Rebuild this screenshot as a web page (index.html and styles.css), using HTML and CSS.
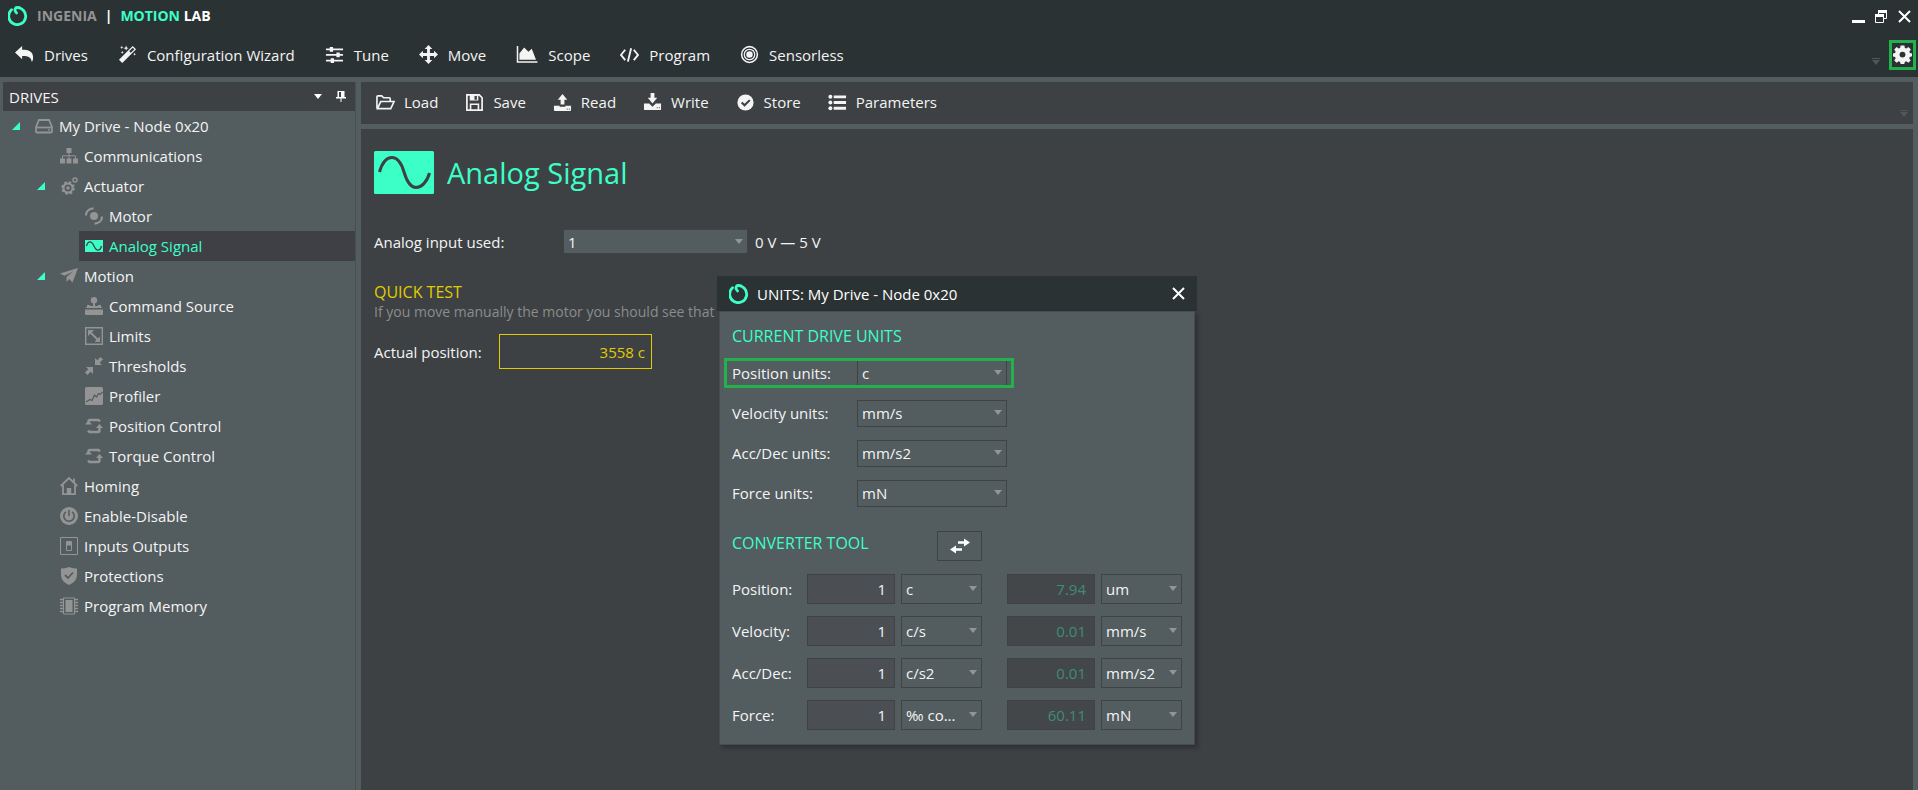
FILE: index.html
```html
<!DOCTYPE html>
<html lang="en">
<head>
    <meta charset="UTF-8">
    <meta name="viewport" content="width=device-width, initial-scale=1.0">
    <title>Ingenia Motion Lab</title>
    <link rel="stylesheet" href="styles.css">
</head>
<body>
    <!-- Shared icons -->
    <svg class="sprite" aria-hidden="true">
        <symbol id="i-logo" viewBox="0 0 20 20">
            <path d="M3.500 3.800A8.500 8.500 0 1 0 8 1.700c-1.500 1.500-1.300 3.300.5 5.200M8 1.700q2-.5 4 .1" fill="none" stroke="currentColor" stroke-width="2.800" stroke-linecap="round"/>
        </symbol>
        <symbol id="i-sine" viewBox="0 0 60 43">
            <rect width="60" height="43" rx="1.500" fill="#3cffc8"/>
            <path d="M5.500 21C8 12 12.500 6.500 18 6.500c6 0 9.500 6 12 14.500 3 10 6.500 15.500 12 15.500S53 31 55.500 22" fill="none" stroke="#3d4143" stroke-width="3"/>
        </symbol>
        <symbol id="i-loop" viewBox="0 0 18 18">
            <path d="M3.500 7V4.500q0-1.500 1.500-1.500h8.500l1.500 1.500M14.500 11v2.500q0 1.500-1.500 1.500H4.500L3 13.500" fill="none" stroke="currentColor" stroke-width="2.400"/>
            <path d="M0 7.500l3.500-4L7 7.500zM11 11l3.500-4L18 11z" fill="currentColor"/>
        </symbol>
        <symbol id="i-overflow" viewBox="0 0 8 7">
            <path d="M0 0h8v1H0zM0 2h8L4 7z" fill="#50575a"/>
        </symbol>
    </svg>

    <header class="app-header">
        <div class="title-bar">
            <svg class="logo"><use href="#i-logo"/></svg>
            <div class="brand"><span class="brand-company">INGENIA</span><span class="brand-sep">|</span><span class="brand-product">MOTION</span> LAB</div>
            <div class="window-buttons">
                <button type="button" aria-label="Minimize"><svg viewBox="0 0 13 13"><path d="M0 10h13v3H0z" fill="#fff"/></svg></button>
                <button type="button" aria-label="Restore"><svg viewBox="0 0 13 13"><path d="M3.500 4V1.500h8v7H9" fill="none" stroke="#fff"/><path d="M3 0h9v3H3z" fill="#fff"/><path d="M.5 5.500h8v7h-8z" fill="none" stroke="#fff"/><path d="M0 4h9v3H0z" fill="#fff"/></svg></button>
                <button type="button" aria-label="Close"><svg viewBox="0 0 13 13"><path d="M1 1l11 11M12 1L1 12" stroke="#fff" stroke-width="2"/></svg></button>
            </div>
        </div>
        <div class="nav-bar">
            <nav class="menu">
                <a href="#"><svg class="icon" viewBox="0 0 20 20"><path d="M7.500 1v4c7 0 11 2 11.500 7 .2 2.500-.2 4.500-1.300 6-.5-4.500-2.700-6.500-10.200-6.500V15L0 8z" fill="currentColor"/></svg>Drives</a>
                <a href="#"><svg class="icon" viewBox="0 0 20 20"><path d="M15.500 1L19 4.500 4.500 19 1 15.500zm0 1.800l-3.700 3.700 1.700 1.700 3.700-3.700z" fill="currentColor" fill-rule="evenodd"/><path d="M4 .5l.5 1.500 1.500.5-1.500.5L4 4.500 3.500 3 2 2.500 3.500 2zM8.500.5l.8 2 2 .8-2 .7-.8 2-.7-2-2-.7 2-.8zM4.500 6l.5 1.300 1.300.5-1.300.4-.5 1.300L4 8.200l-1.300-.4L4 7.300zM17.500 8l.4 1.200 1.200.5-1.200.4-.4 1.200-.5-1.200-1.200-.4 1.200-.5z" fill="currentColor"/></svg>Configuration Wizard</a>
                <a href="#"><svg class="icon" viewBox="0 0 20 20"><path d="M1 4.500h18M1 10.500h18M1 16.500h18" stroke="currentColor" stroke-width="1.800"/><path d="M5 2h3.500v5H5zM12 8h3.500v5H12zM6 14h3.500v5H6z" fill="currentColor"/></svg>Tune</a>
                <a href="#"><svg class="icon" viewBox="0 0 20 20"><path d="M10 0l4 4.200h-2.500v4.300h4.300V6L20 10l-4.200 4v-2.500h-4.300v4.300H14L10 20l-4-4.200h2.500v-4.300H4.200V14L0 10l4.200-4v2.500h4.300V4.200H6z" fill="currentColor"/></svg>Move</a>
                <a href="#"><svg class="icon icon-wide" viewBox="0 0 22 20"><path d="M1 1v17h21" fill="none" stroke="currentColor" stroke-width="1.600"/><path d="M3 15.500V9l5-6.500L12.500 7l3.500-3 4.500 11.500z" fill="currentColor"/></svg>Scope</a>
                <a href="#"><svg class="icon" viewBox="0 0 20 20"><path d="M5.500 5L1 10.500 5.500 16M14.500 5l4.500 5.500-4.500 5.500M11.700 3.500L8.300 17.500" fill="none" stroke="currentColor" stroke-width="2"/></svg>Program</a>
                <a href="#"><svg class="icon" viewBox="0 0 20 20"><g fill="none" stroke="currentColor"><circle cx="10" cy="10" r="8.300" stroke-width="1.600"/><circle cx="10" cy="10" r="5.500" stroke-width="1.300"/></g><circle cx="10" cy="10" r="3.400" fill="currentColor"/></svg>Sensorless</a>
            </nav>
            <svg class="overflow-mark"><use href="#i-overflow"/></svg>
            <button type="button" class="settings" aria-label="Settings"><svg viewBox="0 0 20 20"><path d="M8 .5h4l.5 2.700 1.500.6 2.300-1.600 2.500 2.500L17.200 7l.6 1.500 2.200.4v3l-2.300.6-.6 1.500 1.500 2.200-2.500 2.400-2.200-1.400-1.500.6-.5 2.200H8l-.5-2.200-1.500-.6-2.200 1.400-2.500-2.400L2.800 14l-.6-1.500L0 12V8.900l2.200-.4L2.800 7 1.300 4.700l2.500-2.500L6 3.800l1.500-.6zM10 7a3.100 3.100 0 1 0 0 6.200A3.100 3.100 0 0 0 10 7z" fill="#f4f4f4" fill-rule="evenodd"/></svg></button>
        </div>
    </header>

    <div class="workspace">
        <!-- Drives tree -->
        <aside class="sidebar">
            <div class="sidebar-header">
                <h2>DRIVES</h2>
                <button type="button" aria-label="Panel menu"><svg class="caret" viewBox="0 0 8 5"><path d="M0 0h8L4 5z" fill="#fff"/></svg></button>
                <button type="button" aria-label="Pin panel"><svg class="pin" viewBox="0 0 10 11"><path d="M1.500 0h7v6H10v1.500H5.500V11h-1V7.500H0V6h1.500zM3 1v5h2V1z" fill="#fff" fill-rule="evenodd"/></svg></button>
            </div>
            <ul class="tree">
                <li class="open"><a href="#"><svg viewBox="0 0 18 18"><path d="M4 3h10l3 7v4.500q0 1-1 1H2q-1 0-1-1V10z" fill="none" stroke="currentColor" stroke-width="1.800"/><path d="M1 10.500h16" stroke="currentColor" stroke-width="1.800"/><circle cx="14" cy="13" r=".9" fill="currentColor"/></svg>My Drive - Node 0x20</a></li>
                <li class="level-1"><a href="#"><svg viewBox="0 0 18 18"><path d="M6.500 1h5v5h-5zM0 11.500h5v5H0zM6.500 11.500h5v5h-5zM13 11.500h5v5h-5z" fill="currentColor"/><path d="M9 5v7M2.500 12V8.800h13V12" fill="none" stroke="currentColor"/></svg>Communications</a></li>
                <li class="level-1 open"><a href="#"><svg viewBox="0 0 18 18"><circle cx="8" cy="11" r="5.700" fill="none" stroke="currentColor" stroke-width="2.200" stroke-dasharray="2.500 1.980"/><circle cx="8" cy="11" r="4.500" fill="none" stroke="currentColor" stroke-width="2"/><circle cx="8" cy="11" r="1.700" fill="currentColor"/><circle cx="15" cy="3" r="2" fill="none" stroke="currentColor" stroke-width="1.500"/></svg>Actuator</a></li>
                <li class="level-2"><a href="#"><svg viewBox="0 0 18 18"><circle cx="9" cy="9" r="4" fill="currentColor"/><path d="M1 8.500C1 4.500 4 1.500 8.500 1.300M17 9.500c0 4-3 7-7.500 7.200" fill="none" stroke="currentColor" stroke-width="2.200"/></svg>Motor</a></li>
                <li class="level-2 selected"><a href="#"><svg viewBox="0 0 18 18"><path d="M0 3h18v12H0z" fill="#3cffc8"/><path d="M1.500 9C3 3.500 6.500 3.500 9 9s6 5.500 7.500 0" fill="none" stroke="#3f3f46" stroke-width="1.300"/></svg>Analog Signal</a></li>
                <li class="level-1 open"><a href="#"><svg viewBox="0 0 18 18"><path d="M18 1L0 6.500l4.500 2.200L13 4.500 6.500 10v5l2.700-3 3.300 3.500z" fill="currentColor"/></svg>Motion</a></li>
                <li class="level-2"><a href="#"><svg viewBox="0 0 18 18"><circle cx="9" cy="3.300" r="3.200" fill="currentColor"/><path d="M8 5h2v4h3V8h3v2l2 1H0l2-1V8h3v1h3zM0 12.500h18V17q0 1-1 1H1q-1 0-1-1z" fill="currentColor"/></svg>Command Source</a></li>
                <li class="level-2"><a href="#"><svg viewBox="0 0 18 18"><path d="M.7.700h16.600v16.600H.7z" fill="none" stroke="currentColor" stroke-width="1.400"/><path d="M5 5l8 8" stroke="currentColor" stroke-width="2"/><path d="M3 3h6L3 9zM15 15H9.500l5.500-5.500z" fill="currentColor"/></svg>Limits</a></li>
                <li class="level-2"><a href="#"><svg viewBox="0 0 18 18"><path d="M10 1v7h7l-2.300-2.300L18 2.500 15.500 0l-3.200 3.200zM8 17v-7H1l2.300 2.300L0 15.500 2.500 18l3.200-3.200z" fill="currentColor"/></svg>Thresholds</a></li>
                <li class="level-2"><a href="#"><svg viewBox="0 0 18 18"><rect width="18" height="18" rx="1.500" fill="currentColor"/><path d="M1 15l4-2.500 2 1L9.500 8l2 2L13.500 6.500l1.500 1L17.500 5" fill="none" stroke="#535c5f" stroke-width="1.200"/></svg>Profiler</a></li>
                <li class="level-2"><a href="#"><svg><use href="#i-loop"/></svg>Position Control</a></li>
                <li class="level-2"><a href="#"><svg><use href="#i-loop"/></svg>Torque Control</a></li>
                <li class="level-1"><a href="#"><svg viewBox="0 0 18 18"><path d="M.7 9L9 1l8.300 8M14 5V1.500M3 8v9.200h12V8" fill="none" stroke="currentColor" stroke-width="1.800"/><path d="M6.800 11h4.400v6H6.800z" fill="currentColor"/></svg>Homing</a></li>
                <li class="level-1"><a href="#"><svg viewBox="0 0 18 18"><circle cx="9" cy="9" r="9" fill="currentColor"/><path d="M6 4.800a5.200 5.200 0 1 0 6 0M9 3v6" fill="none" stroke="#535c5f" stroke-width="1.600"/></svg>Enable-Disable</a></li>
                <li class="level-1"><a href="#"><svg viewBox="0 0 18 18"><path d="M.5.500h17v17H.5zM6.500 4.500h5v9h-5z" fill="none" stroke="currentColor"/><path d="M6.500 4.500h5v4h-5z" fill="currentColor"/></svg>Inputs Outputs</a></li>
                <li class="level-1"><a href="#"><svg viewBox="0 0 18 18"><path d="M9 0q4 1.500 8 1.500V8q0 6.500-8 10Q1 14.500 1 8V1.500Q5 1.500 9 0z" fill="currentColor"/><path d="M5 8l3 3 5-5.500" fill="none" stroke="#535c5f" stroke-width="1.800"/></svg>Protections</a></li>
                <li class="level-1"><a href="#"><svg viewBox="0 0 18 18"><path d="M3.500 1h11v16h-11z" fill="none" stroke="currentColor"/><path d="M5.500 3h7v12h-7z" fill="currentColor"/><path d="M0 2.500h3M0 5.500h3M0 8.500h3M0 11.500h3M0 14.500h3M15 2.500h3M15 5.500h3M15 8.500h3M15 11.500h3M15 14.500h3" stroke="currentColor" stroke-width="1.400"/></svg>Program Memory</a></li>
            </ul>
        </aside>

        <main class="main">
            <div class="toolbar">
                <div class="menu">
                    <a href="#"><svg class="icon" viewBox="0 0 20 20"><path d="M1 16V4q0-1 1-1h4l2 2h6q1 0 1 1v2.500M1.500 16.500L5 9h14l-3.500 7.500z" fill="none" stroke="currentColor" stroke-width="1.700"/></svg>Load</a>
                    <a href="#"><svg class="icon" viewBox="0 0 20 20"><path d="M2 2h13l3 3v13H2z" fill="none" stroke="currentColor" stroke-width="1.800"/><path d="M5 2h9v6H5zm5 1v4h2.500V3zM5 11h10v7h-1.700v-5.300H6.700V18H5z" fill="currentColor" fill-rule="evenodd"/></svg>Save</a>
                    <a href="#"><svg class="icon" viewBox="0 0 20 20"><path d="M10 1l5 6h-3v5H8V7H5zM1 13.500h6v1h6v-1h6V18q0 1-1 1H2q-1 0-1-1z" fill="currentColor"/><path d="M14.500 17h1M16.700 17h1" stroke="#3d4143"/></svg>Read</a>
                    <a href="#"><svg class="icon" viewBox="0 0 20 20"><path d="M8 0h4v5h3l-5 6-5-6h3zM1 11h5.500L10 14.500l3.500-3.500H19v6q0 1-1 1H2q-1 0-1-1z" fill="currentColor"/><path d="M14.500 15.500h1M16.700 15.500h1" stroke="#3d4143"/></svg>Write</a>
                    <a href="#"><svg class="icon" viewBox="0 0 20 20"><circle cx="10" cy="10" r="8.500" fill="currentColor"/><path d="M6 10l3 3 5.500-5.500" fill="none" stroke="#3d4143" stroke-width="2.200"/></svg>Store</a>
                    <a href="#"><svg class="icon" viewBox="0 0 20 20"><path d="M6 4h13M6 10h13M6 16h13" stroke="currentColor" stroke-width="3"/><circle cx="2.500" cy="4" r="2.100" fill="currentColor"/><circle cx="2.500" cy="10" r="2.100" fill="currentColor"/><circle cx="2.500" cy="16" r="2.100" fill="currentColor"/></svg>Parameters</a>
                </div>
                <svg class="overflow-mark"><use href="#i-overflow"/></svg>
            </div>

            <section class="content">
                <div class="page-title">
                    <svg><use href="#i-sine"/></svg>
                    <h1>Analog Signal</h1>
                </div>
                <div class="input-row">
                    <label for="analogInput">Analog input used:</label>
                    <span class="select"><select id="analogInput"><option>1</option></select></span>
                    <span>0 V — 5 V</span>
                </div>
                <h3>QUICK TEST</h3>
                <p class="hint">If you move manually the motor you should see that</p>
                <div class="position-row">
                    <label for="actualPosition">Actual position:</label>
                    <input id="actualPosition" type="text" value="3558 c" readonly>
                </div>
            </section>
        </main>
    </div>

    <!-- Units window -->
    <div class="dialog" role="dialog" aria-labelledby="unitsTitle">
        <div class="dialog-header">
            <svg class="logo"><use href="#i-logo"/></svg>
            <h2 id="unitsTitle">UNITS: My Drive - Node 0x20</h2>
            <button type="button" aria-label="Close units"><svg viewBox="0 0 13 13"><path d="M1 1l11 11M12 1L1 12" stroke="#fff" stroke-width="2"/></svg></button>
        </div>
        <div class="dialog-body">
            <h3>CURRENT DRIVE UNITS</h3>
            <div class="units">
                <div class="unit-row highlight">
                    <label for="posUnits">Position units:</label>
                    <span class="select"><select id="posUnits"><option>c</option></select></span>
                </div>
                <div class="unit-row">
                    <label for="velUnits">Velocity units:</label>
                    <span class="select"><select id="velUnits"><option>mm/s</option></select></span>
                </div>
                <div class="unit-row">
                    <label for="accUnits">Acc/Dec units:</label>
                    <span class="select"><select id="accUnits"><option>mm/s2</option></select></span>
                </div>
                <div class="unit-row">
                    <label for="forceUnits">Force units:</label>
                    <span class="select"><select id="forceUnits"><option>mN</option></select></span>
                </div>
            </div>

            <div class="converter-header">
                <h3>CONVERTER TOOL</h3>
                <button type="button" class="swap" aria-label="Swap units"><svg viewBox="0 0 20 16"><path d="M8 4.500h7M12 11.500H5" stroke="#fff" stroke-width="2.600"/><path d="M14 .5l6 4-6 4zM6 7.500l-6 4 6 4z" fill="#fff"/></svg></button>
            </div>
            <div class="converter">
                <div class="convert-row">
                    <label for="convPos">Position:</label>
                    <input id="convPos" type="text" value="1">
                    <span class="select"><select aria-label="Position from"><option>c</option></select></span>
                    <input class="result" type="text" value="7.94" aria-label="Position result" readonly>
                    <span class="select"><select aria-label="Position to"><option>um</option></select></span>
                </div>
                <div class="convert-row">
                    <label for="convVel">Velocity:</label>
                    <input id="convVel" type="text" value="1">
                    <span class="select"><select aria-label="Velocity from"><option>c/s</option></select></span>
                    <input class="result" type="text" value="0.01" aria-label="Velocity result" readonly>
                    <span class="select"><select aria-label="Velocity to"><option>mm/s</option></select></span>
                </div>
                <div class="convert-row">
                    <label for="convAcc">Acc/Dec:</label>
                    <input id="convAcc" type="text" value="1">
                    <span class="select"><select aria-label="Acc/Dec from"><option>c/s2</option></select></span>
                    <input class="result" type="text" value="0.01" aria-label="Acc/Dec result" readonly>
                    <span class="select"><select aria-label="Acc/Dec to"><option>mm/s2</option></select></span>
                </div>
                <div class="convert-row">
                    <label for="convForce">Force:</label>
                    <input id="convForce" type="text" value="1">
                    <span class="select"><select aria-label="Force from"><option>‰ co...</option></select></span>
                    <input class="result" type="text" value="60.11" aria-label="Force result" readonly>
                    <span class="select"><select aria-label="Force to"><option>mN</option></select></span>
                </div>
            </div>
        </div>
    </div>
</body>
</html>
```
FILE: styles.css
```css
* { box-sizing: border-box; }

body {
    margin: 0;
    min-height: 100vh;
    display: flex;
    flex-direction: column;
    background-color: #535c5f;
    color: #f4f4f4;
    font: 15px/20px "Open Sans", "Noto Sans", sans-serif;
}

h1, h2, h3, p, ul { margin: 0; padding: 0; font-weight: normal; }
h2 { font-size: 15px; }
h3 { font-size: 16px; }
a { color: inherit; text-decoration: none; }
button { padding: 0; border: 0; background: none; cursor: pointer; }
svg { display: block; flex: none; }
input, select { font: inherit; color: inherit; }
.sprite { position: absolute; width: 0; height: 0; }
.logo { width: 20px; height: 20px; color: #3cffc8; }

/* Header */
.app-header { background-color: #2b3234; height: 77px; }
.title-bar { display: flex; align-items: center; height: 32px; padding: 0 7px 0 8px; }
.brand { margin-left: 9px; font-size: 14px; font-weight: bold; color: #fff; }
.brand-company { color: #949494; }
.brand-sep { margin: 0 8px; }
.brand-product { color: #3cffc8; }
.window-buttons { margin-left: auto; display: flex; gap: 10px; }
.window-buttons svg { width: 13px; height: 13px; }

.nav-bar { display: flex; align-items: center; height: 45px; padding: 0 2px 0 15px; }
.menu { display: flex; gap: 30px; }
.menu a { display: flex; align-items: center; gap: 10px; }
.icon { width: 19px; height: 19px; }
.icon-wide { width: 22px; }

.overflow-mark { width: 8px; height: 7px; align-self: flex-end; margin: 0 9px 12px auto; }

.settings { width: 27px; height: 30px; border: 3px solid #22b14c; display: flex; align-items: center; justify-content: center; }
.settings svg { width: 19px; height: 19px; }

.workspace { flex: 1; display: flex; gap: 5px; padding: 5px 5px 0 3px; }

/* Sidebar */
.sidebar { width: 353px; flex: none; border-right: 1px solid #474f52; }
.sidebar-header { display: flex; align-items: center; gap: 14px; height: 29px; padding: 0 9px 0 6px; background-color: #3d4143; }
.sidebar-header h2 { margin-right: auto; }
.caret { width: 8px; height: 5px; }
.pin { width: 10px; height: 11px; }

.tree { list-style: none; }
.tree li { display: flex; align-items: center; height: 30px; }
.tree li::before { content: ""; width: 8px; height: 8px; margin: 0 9px; }
.tree .open::before { background: #3cffc8; clip-path: polygon(100% 0, 100% 100%, 0 100%); }
.tree .level-1 { margin-left: 25px; }
.tree .level-2 { margin-left: 50px; }
.tree a { flex: 1; display: flex; align-items: center; gap: 6px; height: 30px; padding-left: 6px; }
.tree svg { width: 18px; height: 18px; color: #949494; }
.tree .selected a { background-color: #3f3f46; color: #3cffc8; }

/* Main area */
.main { flex: 1; min-width: 0; display: flex; flex-direction: column; gap: 5px; }
.toolbar { display: flex; align-items: center; height: 42px; padding: 0 0 2px 15px; background-color: #3d4143; }
.toolbar .menu { gap: 27px; }
.toolbar a { gap: 9px; }
.toolbar .overflow-mark { margin: 0 5px 5px auto; }
.content { flex: 1; padding: 22px 13px; background-color: #3d4143; }

.page-title { display: flex; align-items: center; gap: 13px; color: #3cffc8; }
.page-title svg { width: 60px; height: 43px; }
.page-title h1 { font-size: 29px; line-height: 43px; }

.select { position: relative; display: block; }
.select::after {
    content: "";
    position: absolute;
    top: 50%;
    right: 5px;
    margin-top: -3px;
    border: 4px solid transparent;
    border-top: 5px solid #949494;
    border-bottom: 0;
    pointer-events: none;
}
select {
    appearance: none;
    display: block;
    width: 100%;
    height: 27px;
    padding: 0 4px;
    border: 1px solid #3f4346;
    border-radius: 0;
    background-color: #535c5f;
}

.input-row { display: flex; align-items: center; margin: 35px 0 28px; }
.input-row label { width: 189px; }
.input-row .select { width: 185px; margin-right: 7px; }
.input-row select { height: 25px; }
.content h3 { color: #e2cc00; }
.hint { color: #8c8c8c; font-size: 14px; }
.position-row { display: flex; align-items: center; margin-top: 12px; }
.position-row label { width: 125px; }
.position-row input {
    width: 153px;
    height: 35px;
    padding: 0 6px;
    border: 1px solid #e2cc00;
    background: none;
    color: #e2cc00;
    text-align: right;
}

/* Units window */
.dialog { position: absolute; top: 276px; left: 717px; width: 480px; }
.dialog-header { display: flex; align-items: center; height: 35px; padding: 0 12px; background-color: #2b3234; }
.dialog-header h2 { margin: 0 auto 0 8px; color: #fff; }
.dialog-header button svg { width: 13px; height: 13px; }
.dialog-body {
    margin: 0 2px;
    padding: 14px 12px;
    background-color: #535c5f;
    border: 1px solid #474c50;
    box-shadow: 3px 3px 4px rgba(0, 0, 0, 0.25);
}
.dialog h3 { color: #3cffc8; }
.units { display: flex; flex-direction: column; gap: 10px; margin-top: 12px; }
.unit-row { display: flex; align-items: center; height: 30px; }
.unit-row label { width: 125px; }
.unit-row .select { width: 150px; }
.highlight { width: 290px; margin-left: -8px; padding-left: 5px; border: 3px solid #22b14c; }
.highlight select { height: 24px; border-width: 0 1px; }

.converter-header { display: flex; align-items: flex-start; margin-top: 23px; }
.converter-header h3 { width: 205px; line-height: 24px; }
.swap { width: 45px; height: 30px; border: 1px solid #3f4346; display: flex; align-items: center; justify-content: center; }
.swap svg { width: 20px; height: 16px; }
.converter { display: flex; flex-direction: column; gap: 12px; margin-top: 13px; }
.convert-row { display: grid; grid-template-columns: 69px 88px 81px 107px 81px; column-gap: 6px; align-items: center; }
.convert-row select { height: 30px; }
.convert-row input {
    width: 88px;
    height: 30px;
    padding: 0 8px;
    border: 1px solid #3f4346;
    background-color: #4b4f54;
    text-align: right;
}
.convert-row .result { justify-self: end; background-color: #434749; color: #3f8c76; }
```
